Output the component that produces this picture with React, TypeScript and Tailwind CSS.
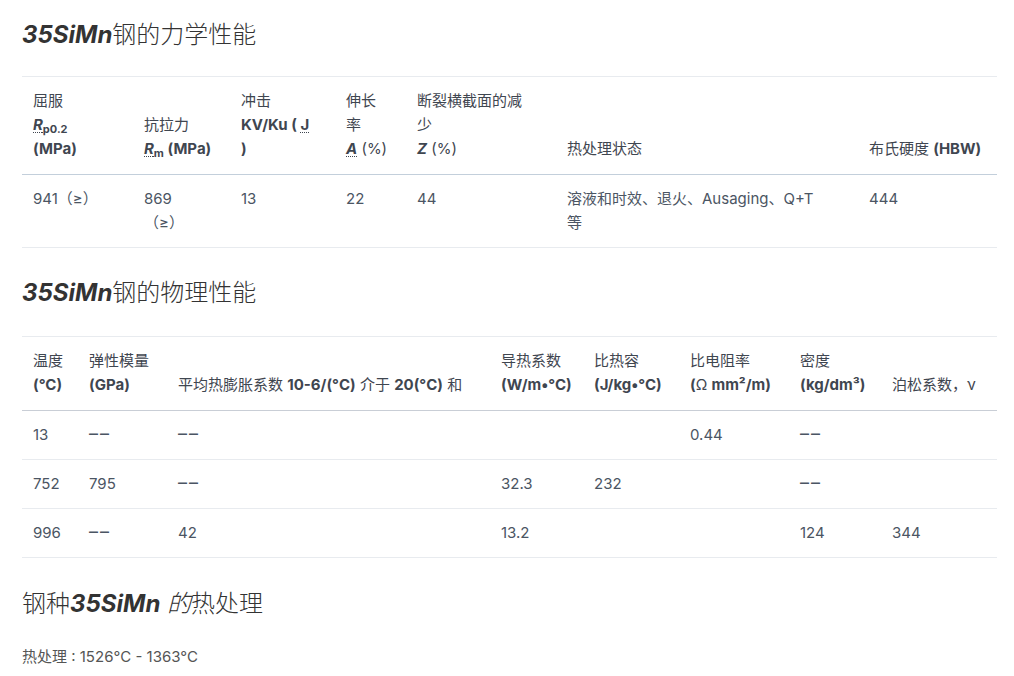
import React from "react";

const font = {
  fontFamily: '"Inter", "Noto Sans CJK SC", sans-serif',
};

function Abbr({ children }: { children: React.ReactNode }) {
  return (
    <span className="underline decoration-dotted decoration-1 underline-offset-2">
      {children}
    </span>
  );
}

function Dash() {
  return (
    <span className="text-[18px] leading-none tracking-[2px] text-[#4b5563]">
      ––
    </span>
  );
}

const th =
  "px-[11px] pt-3 pb-[13px] text-left align-bottom font-normal text-[#3f4650]";
const td = "px-[11px] py-3 align-top text-[#4b5563]";

export default function App() {
  return (
    <div
      className="bg-white px-[22px] pt-[19px] text-[15px] leading-6 text-[#4b5563]"
      style={font}
    >
      <h2 className="text-[24px] font-light leading-8 text-[#333]">
        <em className="font-bold">35SiMn</em>钢的力学性能
      </h2>

      <table className="mt-[25px] w-[975px] table-fixed border-collapse">
        <colgroup>
          <col className="w-[111px]" />
          <col className="w-[97px]" />
          <col className="w-[105px]" />
          <col className="w-[71px]" />
          <col className="w-[150px]" />
          <col className="w-[302px]" />
          <col className="w-[139px]" />
        </colgroup>
        <thead>
          <tr className="border-t border-b border-t-[#e8ebef] border-b-[#c3cfdb]">
            <th className={th}>
              <div>屈服</div>
              <div className="font-bold">
                <Abbr>
                  <i>R</i>
                  <sub className="text-[11px]">p0.2</sub>
                </Abbr>
              </div>
              <div className="font-bold">(MPa)</div>
            </th>
            <th className={th}>
              <div>抗拉力</div>
              <div className="font-bold whitespace-nowrap">
                <Abbr>
                  <i>R</i>
                  <sub className="text-[11px]">m</sub>
                </Abbr>{" "}
                (MPa)
              </div>
            </th>
            <th className={th}>
              <div>冲击</div>
              <div className="font-bold whitespace-nowrap">
                KV/Ku ( <Abbr>J</Abbr>
              </div>
              <div className="font-bold">)</div>
            </th>
            <th className={th}>
              <div>伸长</div>
              <div>率</div>
              <div>
                <Abbr>
                  <i className="font-bold">A</i>
                </Abbr>{" "}
                (%)
              </div>
            </th>
            <th className={th}>
              <div>断裂横截面的减</div>
              <div>少</div>
              <div>
                <i className="font-bold">Z</i> (%)
              </div>
            </th>
            <th className={th}>热处理状态</th>
            <th className={th}>
              布氏硬度 <span className="font-bold">(HBW)</span>
            </th>
          </tr>
        </thead>
        <tbody>
          <tr className="border-b border-[#e8ebef]">
            <td className={td}>941（≥）</td>
            <td className={td}>
              <div>869</div>
              <div>（≥）</div>
            </td>
            <td className={td}>13</td>
            <td className={td}>22</td>
            <td className={td}>44</td>
            <td className={td}>
              <div>溶液和时效、退火、Ausaging、Q+T</div>
              <div>等</div>
            </td>
            <td className={td}>444</td>
          </tr>
        </tbody>
      </table>

      <h2 className="mt-[29px] text-[24px] font-light leading-8 text-[#333]">
        <em className="font-bold">35SiMn</em>钢的物理性能
      </h2>

      <table className="mt-[27px] w-[975px] table-fixed border-collapse">
        <colgroup>
          <col className="w-[56px]" />
          <col className="w-[89px]" />
          <col className="w-[323px]" />
          <col className="w-[93px]" />
          <col className="w-[96px]" />
          <col className="w-[110px]" />
          <col className="w-[92px]" />
          <col className="w-[116px]" />
        </colgroup>
        <thead>
          <tr className="border-t border-b border-t-[#e8ebef] border-b-[#c9ced6]">
            <th className={th}>
              <div>温度</div>
              <div className="font-bold">(°C)</div>
            </th>
            <th className={th}>
              <div>弹性模量</div>
              <div className="font-bold">(GPa)</div>
            </th>
            <th className={th + " whitespace-nowrap"}>
              平均热膨胀系数 <span className="font-bold">10-6/(°C)</span> 介于{" "}
              <span className="font-bold">20(°C)</span> 和
            </th>
            <th className={th}>
              <div>导热系数</div>
              <div className="font-bold whitespace-nowrap">(W/m•°C)</div>
            </th>
            <th className={th}>
              <div>比热容</div>
              <div className="font-bold whitespace-nowrap">(J/kg•°C)</div>
            </th>
            <th className={th}>
              <div>比电阻率</div>
              <div className="whitespace-nowrap">
                <span className="font-bold">(</span>Ω{" "}
                <span className="font-bold">mm²/m)</span>
              </div>
            </th>
            <th className={th}>
              <div>密度</div>
              <div className="font-bold whitespace-nowrap">(kg/dm³)</div>
            </th>
            <th className={th}>泊松系数，ν</th>
          </tr>
        </thead>
        <tbody>
          <tr className="border-b border-[#e8ebef]">
            <td className={td}>13</td>
            <td className={td}>
              <Dash />
            </td>
            <td className={td}>
              <Dash />
            </td>
            <td className={td}></td>
            <td className={td}></td>
            <td className={td}>0.44</td>
            <td className={td}>
              <Dash />
            </td>
            <td className={td}></td>
          </tr>
          <tr className="border-b border-[#e8ebef]">
            <td className={td}>752</td>
            <td className={td}>795</td>
            <td className={td}>
              <Dash />
            </td>
            <td className={td}>32.3</td>
            <td className={td}>232</td>
            <td className={td}></td>
            <td className={td}>
              <Dash />
            </td>
            <td className={td}></td>
          </tr>
          <tr className="border-b border-[#e8ebef]">
            <td className={td}>996</td>
            <td className={td}>
              <Dash />
            </td>
            <td className={td}>42</td>
            <td className={td}>13.2</td>
            <td className={td}></td>
            <td className={td}></td>
            <td className={td}>124</td>
            <td className={td}>344</td>
          </tr>
        </tbody>
      </table>

      <h2 className="mt-[30px] text-[24px] font-light leading-8 text-[#333]">
        钢种
        <em>
          <strong className="font-bold">35SiMn</strong> 的
        </em>
        热处理
      </h2>

      <p className="mt-[25px] text-[15px] leading-6 text-[#555]">
        热处理 : 1526°C - 1363°C
      </p>
    </div>
  );
}
